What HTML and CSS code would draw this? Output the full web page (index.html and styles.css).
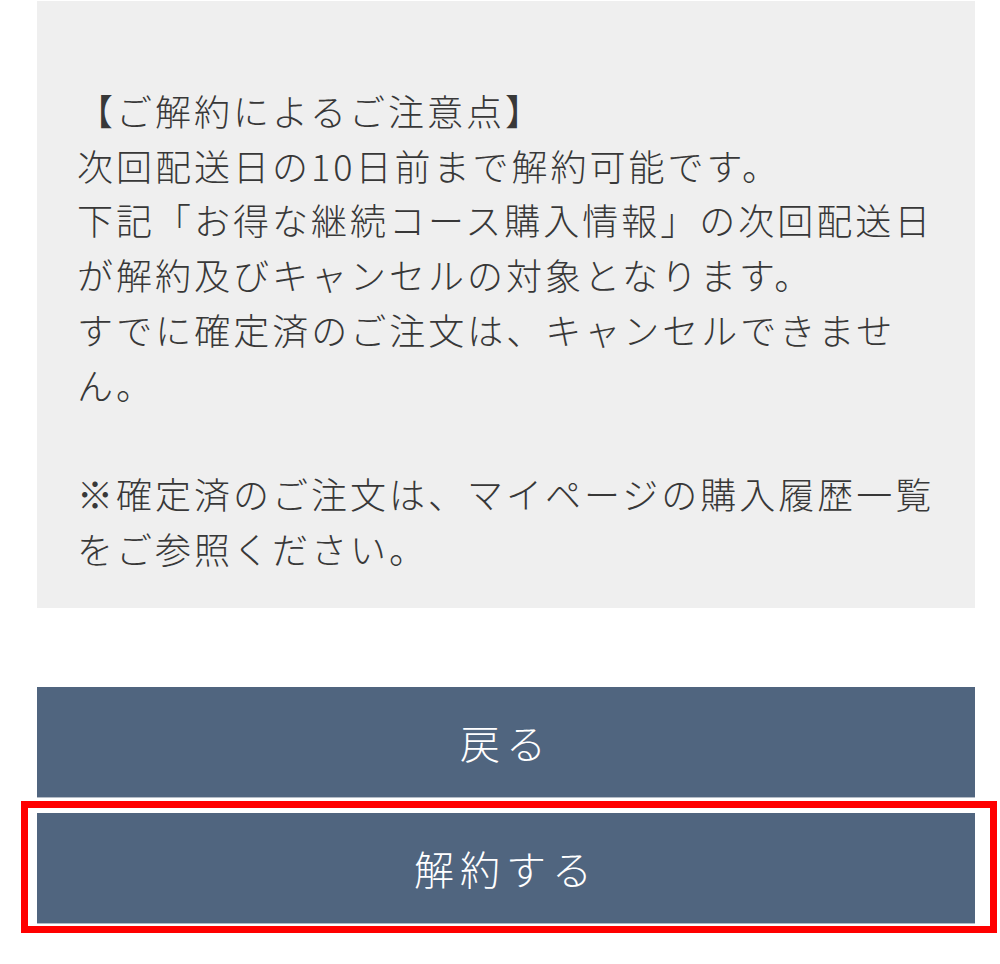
FILE: index.html
```html
<!DOCTYPE html>
<html lang="ja">
<head>
  <meta charset="UTF-8" />
  <meta name="viewport" content="width=device-width, initial-scale=1.0"/>
  <title>解約手続き</title>
  <link rel="stylesheet" href="styles.css">
</head>
<body>
  <section class="cancel-section">
    <div class="notice-box">
      <p>【ご解約によるご注意点】<br>
        次回配送日の10日前まで解約可能です。<br>
        下記「お得な継続コース購入情報」の次回配送日が解約及びキャンセルの対象となります。<br>
        すでに確定済のご注文は、キャンセルできません。<br>
        <br>
        ※確定済のご注文は、マイページの購入履歴一覧をご参照ください。</p>
    </div>

    <div class="actions">
      <button type="button" class="action-btn">戻る</button>
      <div class="highlight">
        <button type="submit" class="action-btn">解約する</button>
      </div>
    </div>
  </section>
</body>
</html>
```

FILE: styles.css
```css
body {
  margin: 0;
  min-height: 964px;
  background: #ffffff;
  font-family: "Noto Sans CJK JP", "Noto Sans", sans-serif;
}

.cancel-section {
  width: 938px;
  margin-left: 37px;
  padding: 1px 0 40px;
}

.notice-box {
  background: #efefef;
  padding: 82px 30px 33px 40px;
}

.notice-box p {
  margin: 0;
  font-size: 36px;
  font-weight: 300;
  line-height: 54.7px;
  letter-spacing: 3px;
  color: #383838;
}

.actions {
  margin-top: 79px;
  display: flex;
  flex-direction: column;
  gap: 15px;
}

.action-btn {
  display: block;
  width: 100%;
  height: 111px;
  background: #50657f;
  color: #ffffff;
  border: none;
  border-bottom: 1px solid #b4bcc7;
  font-family: inherit;
  font-size: 40px;
  font-weight: 300;
  letter-spacing: 6px;
  cursor: pointer;
}

.highlight {
  position: relative;
}

/* red frame marking the cancel button */
.highlight::after {
  content: "";
  position: absolute;
  left: -16px;
  top: -12px;
  right: -22px;
  bottom: -9px;
  border: 7px solid #ff0000;
  pointer-events: none;
}
```
